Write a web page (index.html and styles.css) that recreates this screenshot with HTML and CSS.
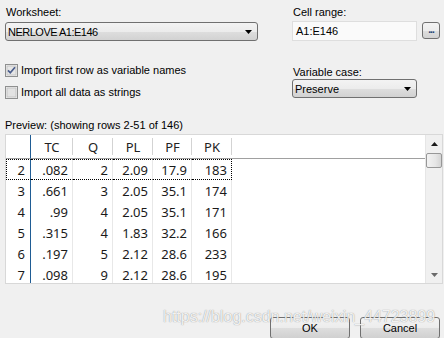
FILE: index.html
```html
<!DOCTYPE html>
<html lang="en">
<head>
  <meta charset="UTF-8" />
  <title>Import Excel</title>
  <link rel="stylesheet" href="styles.css">
</head>
<body>
  <div class="dialog">
    <div class="top">
      <div class="col-left">
        <div class="label">Worksheet:</div>
        <div class="combo combo-sheet">
          <span class="combo-text">NERLOVE A1:E146</span>
          <svg class="arrow" width="7" height="4" viewBox="0 0 7 4"><path d="M0 0h7L3.5 4z" fill="#000"/></svg>
        </div>
        <div class="check check-first">
          <svg class="box" width="13" height="13" viewBox="0 0 13 13">
            <rect x="0.5" y="0.5" width="12" height="12" fill="#f4f4f4" stroke="#8e8f8f"/>
            <rect x="2" y="2" width="9" height="9" fill="#e6e6e6" stroke="#c4c4c4" stroke-width="1"/>
            <path d="M3 6.3L5.3 8.8L10 3.2" fill="none" stroke="#4a5d8c" stroke-width="1.7"/>
          </svg>
          <span>Import first row as variable names</span>
        </div>
        <div class="check check-second">
          <svg class="box" width="13" height="13" viewBox="0 0 13 13">
            <rect x="0.5" y="0.5" width="12" height="12" fill="#f4f4f4" stroke="#8e8f8f"/>
            <rect x="2" y="2" width="9" height="9" fill="#e2e2e2" stroke="#c4c4c4" stroke-width="1"/>
          </svg>
          <span>Import all data as strings</span>
        </div>
      </div>
      <div class="col-right">
        <div class="label">Cell range:</div>
        <div class="range-row">
          <div class="field">A1:E146</div>
          <div class="dots-btn">...</div>
        </div>
        <div class="label label-case">Variable case:</div>
        <div class="combo combo-case">
          <span>Preserve</span>
          <svg class="arrow" width="7" height="4" viewBox="0 0 7 4"><path d="M0 0h7L3.5 4z" fill="#000"/></svg>
        </div>
      </div>
    </div>

    <div class="label preview-label">Preview: (showing rows 2-51 of 146)</div>

    <div class="grid">
      <div class="grid-body">
        <table>
          <thead>
            <tr>
              <th class="rowhead"></th>
              <th class="c-tc">TC</th>
              <th class="c-q">Q</th>
              <th class="c-pl">PL</th>
              <th class="c-pf">PF</th>
              <th class="c-pk">PK</th>
              <th class="filler"></th>
            </tr>
          </thead>
          <tbody>
            <tr class="focus"><td class="rowhead">2</td><td>.082</td><td>2</td><td>2.09</td><td>17.9</td><td>183</td><td class="filler"></td></tr>
            <tr><td class="rowhead">3</td><td>.661</td><td>3</td><td>2.05</td><td>35.1</td><td>174</td><td class="filler"></td></tr>
            <tr><td class="rowhead">4</td><td>.99</td><td>4</td><td>2.05</td><td>35.1</td><td>171</td><td class="filler"></td></tr>
            <tr><td class="rowhead">5</td><td>.315</td><td>4</td><td>1.83</td><td>32.2</td><td>166</td><td class="filler"></td></tr>
            <tr><td class="rowhead">6</td><td>.197</td><td>5</td><td>2.12</td><td>28.6</td><td>233</td><td class="filler"></td></tr>
            <tr><td class="rowhead">7</td><td>.098</td><td>9</td><td>2.12</td><td>28.6</td><td>195</td><td class="filler"></td></tr>
          </tbody>
        </table>
      </div>
      <div class="vscroll">
        <div class="sb-btn">
          <svg width="7" height="4" viewBox="0 0 7 4"><path d="M0 4h7L3.5 0z" fill="#1a1a1a"/></svg>
        </div>
        <div class="sb-thumb"></div>
        <div class="sb-track"></div>
        <div class="sb-btn">
          <svg width="7" height="4" viewBox="0 0 7 4"><path d="M0 0h7L3.5 4z" fill="#6a6a6a"/></svg>
        </div>
      </div>
    </div>

    <div class="actions">
      <button class="btn">OK</button>
      <button class="btn">Cancel</button>
    </div>

    <div class="watermark">https://blog.csdn.net/weixin_44723899</div>
  </div>
</body>
</html>
```

FILE: styles.css
```css
* {
  box-sizing: border-box;
}

body {
  margin: 0;
  background: #f0f0f0;
  color: #000;
  font-family: 'Liberation Sans', Arial, sans-serif;
  font-size: 11px;
}

.dialog {
  position: relative;
  width: 444px;
  height: 338px;
  padding: 5px 1px 0 5px;
  overflow: hidden;
}

.top {
  display: flex;
  justify-content: space-between;
}

.col-left {
  width: 253px;
}

.col-right {
  width: 148px;
  margin-right: 3px;
}

.label {
  height: 14px;
  line-height: 14px;
  padding-left: 1px;
}

/* combo boxes */
.combo {
  display: flex;
  align-items: center;
  justify-content: space-between;
  height: 19px;
  margin-top: 3px;
  padding: 0 5px 0 2px;
  border: 1px solid #707070;
  border-radius: 3px;
  background: linear-gradient(#f3f3f3 0%, #ececec 50%, #dedede 51%, #d2d2d2 100%);
}

.combo-text {
  letter-spacing: -0.5px;
}

.combo-case {
  width: 125px;
  margin-top: 0;
}

.combo .arrow {
  flex: none;
}

/* checkboxes */
.check {
  display: flex;
  align-items: center;
  gap: 3px;
  height: 14px;
}

.check .box {
  flex: none;
}

.check-first {
  margin-top: 22px;
}

.check-second {
  margin-top: 8px;
}

/* cell range */
.range-row {
  display: flex;
  align-items: flex-start;
  gap: 5px;
  margin-top: 2px;
}

.field {
  width: 125px;
  height: 20px;
  line-height: 18px;
  padding-left: 3px;
  background: #fafafa;
  border: 1px solid #dedede;
}

.dots-btn {
  width: 18px;
  height: 17px;
  margin-top: 1px;
  border: 1px solid #707070;
  border-radius: 3px;
  background: linear-gradient(#f3f3f3 0%, #ececec 50%, #dedede 51%, #d2d2d2 100%);
  color: #1e3d73;
  font-weight: bold;
  font-size: 10px;
  line-height: 14px;
  text-align: center;
  letter-spacing: -1px;
}

.label-case {
  margin-top: 24px;
}

.preview-label {
  margin-top: 19px;
  padding-left: 0;
}

/* preview grid */
.grid {
  display: flex;
  height: 150px;
  margin-top: 2px;
  border: 1px solid #d8d8d8;
  background: #fff;
}

.grid-body {
  flex: 1;
  overflow: hidden;
}

table {
  width: 100%;
  border-collapse: separate;
  border-spacing: 0;
  table-layout: fixed;
  font-family: 'Noto Sans', sans-serif;
  font-size: 13px;
  line-height: 16px;
  color: #1a1a1a;
}

th {
  height: 24px;
  padding: 0;
  font-weight: normal;
  text-align: center;
  color: #222;
  border-bottom: 1px solid #a0a0a0;
  background: linear-gradient(#d3d3d3, #d3d3d3) no-repeat right 3px / 1px 17px;
}

td {
  height: 21px;
  padding: 0 4px 0 0;
  text-align: right;
  border-right: 1px solid #e8e8e8;
}

.rowhead {
  width: 25px;
  padding-right: 5px;
  border-right: 1px solid #1f5c94;
  background: none;
}

.c-tc { width: 42px; }
.c-q { width: 40px; }
.c-pl { width: 40px; }
.c-pf { width: 39px; }
.c-pk { width: 40px; }

.filler {
  border-right: none;
  background: none;
}

tr.focus td:not(.filler) {
  border-top: 1px dotted #000;
  border-bottom: 1px dotted #000;
}

tr.focus td.rowhead {
  border-left: 1px dotted #000;
}

tr.focus td:nth-child(6) {
  border-right: 1px dotted #000;
}

/* scrollbar */
.vscroll {
  display: flex;
  flex-direction: column;
  width: 17px;
  background: #f0f0f0;
  border-left: 1px solid #e6e6e6;
}

.sb-btn {
  display: flex;
  align-items: center;
  justify-content: center;
  height: 17px;
}

.sb-thumb {
  height: 15px;
  margin: 1px 0 0 0;
  border: 1px solid #979797;
  border-radius: 2px;
  background: linear-gradient(90deg, #f2f2f2 0%, #e6e6e6 60%, #d4d4d4 100%);
}

.sb-track {
  flex: 1;
}

/* buttons */
.actions {
  display: flex;
  justify-content: flex-end;
  gap: 10px;
  margin-top: 33px;
  padding-right: 3px;
}

.btn {
  width: 80px;
  height: 22px;
  padding: 0;
  border: 1px solid #707070;
  border-radius: 3px;
  background: linear-gradient(#f3f3f3 0%, #ececec 50%, #dedede 51%, #d0d0d0 100%);
  font-family: 'Liberation Sans', Arial, sans-serif;
  font-size: 11px;
  color: #000;
}

.watermark {
  position: absolute;
  left: 163px;
  top: 307px;
  font-family: 'Liberation Sans', Arial, sans-serif;
  font-size: 16px;
  line-height: 20px;
  color: rgba(255, 255, 255, 0.88);
  text-shadow: 0 0 1px rgba(90, 90, 90, 0.75);
  white-space: nowrap;
  pointer-events: none;
}
```
